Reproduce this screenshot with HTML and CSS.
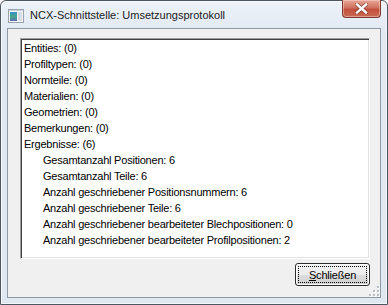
FILE: index.html
```
<!DOCTYPE html>
<html>
<head>
<meta charset="utf-8">
<link rel="stylesheet" href="styles.css">
</head>
<body>
<div class="window">
  <div class="titlebar">
    <span class="app-icon">
      <svg width="16" height="14" viewBox="0 0 16 14">
        <defs>
          <linearGradient id="ig" x1="0" y1="0" x2="0" y2="1">
            <stop offset="0" stop-color="#3a8fd0"/>
            <stop offset="0.5" stop-color="#46a58a"/>
            <stop offset="1" stop-color="#5a6fb8"/>
          </linearGradient>
        </defs>
        <rect x="0.5" y="0.5" width="15" height="13" fill="#f4f6f8" stroke="#9aa3ad"/>
        <rect x="2" y="3" width="7" height="9" fill="url(#ig)"/>
        <rect x="10" y="3" width="4" height="9" fill="#d8dde3"/>
        <rect x="1" y="1" width="14" height="1" fill="#c9d3de"/>
      </svg>
    </span>
    <span class="title">NCX-Schnittstelle: Umsetzungsprotokoll</span>
    <span class="close">
      <svg width="13" height="11" viewBox="0 0 13 11">
        <path d="M2 1.5 L11 9.5 M11 1.5 L2 9.5" stroke="#5a2a24" stroke-width="4" stroke-linecap="square" opacity="0.55"/>
        <path d="M2 1.5 L11 9.5 M11 1.5 L2 9.5" stroke="#ffffff" stroke-width="2.4" stroke-linecap="square"/>
      </svg>
    </span>
  </div>
  <div class="client">
    <div class="listbox">
      <div class="line">Entities: (0)</div>
      <div class="line">Profiltypen: (0)</div>
      <div class="line">Normteile: (0)</div>
      <div class="line">Materialien: (0)</div>
      <div class="line">Geometrien: (0)</div>
      <div class="line">Bemerkungen: (0)</div>
      <div class="line">Ergebnisse: (6)</div>
      <div class="line sub">Gesamtanzahl Positionen: 6</div>
      <div class="line sub">Gesamtanzahl Teile: 6</div>
      <div class="line sub">Anzahl geschriebener Positionsnummern: 6</div>
      <div class="line sub">Anzahl geschriebener Teile: 6</div>
      <div class="line sub">Anzahl geschriebener bearbeiteter Blechpositionen: 0</div>
      <div class="line sub">Anzahl geschriebener bearbeiteter Profilpositionen: 2</div>
    </div>
    <div class="actions">
      <button class="btn"><span class="focus"><u>S</u>chließen</span></button>
    </div>
    <div class="grip">
      <span></span><span></span><span></span>
      <span></span><span></span><span></span>
    </div>
  </div>
</div>
</body>
</html>
```
FILE: styles.css
```
html, body {
  margin: 0;
  padding: 0;
  background: #ffffff;
}

.window {
  position: relative;
  box-sizing: border-box;
  width: 388px;
  height: 305px;
  border: 1px solid #4d5661;
  border-radius: 6px 6px 0 0;
  background: linear-gradient(#eef3f9, #e1e9f3 30px, #dfe7f1);
  padding: 0 6px 6px 6px;
  display: flex;
  flex-direction: column;
  box-shadow: inset 1px 1px 0 #f8fbfe, inset -1px -1px 0 #f3f7fb;
}

.titlebar {
  height: 27px;
  display: flex;
  align-items: flex-start;
  flex: none;
}

.app-icon {
  display: flex;
  margin: 8px 0 0 1px;
  width: 16px;
  height: 14px;
}

.title {
  margin: 7px 0 0 6px;
  font-family: "Liberation Sans", Arial, sans-serif;
  font-size: 11px;
  line-height: 14px;
  color: #1a1a1a;
}

.close {
  margin-left: auto;
  margin-right: 0;
  margin-top: -1px;
  width: 39px;
  height: 18px;
  box-sizing: border-box;
  border: 1px solid #7c3a31;
  border-top: none;
  border-radius: 0 0 4px 4px;
  background: linear-gradient(#e9a898, #d0715f 45%, #c3503c 55%, #c86a54);
  box-shadow: inset 0 0 0 1px rgba(255, 220, 210, 0.45);
  display: flex;
  align-items: center;
  justify-content: center;
}

.client {
  position: relative;
  flex: 1;
  box-sizing: border-box;
  border: 1px solid #8f9aa6;
  background: #f0f0f0;
  padding: 9px 10px 0 12px;
  display: flex;
  flex-direction: column;
}

.listbox {
  box-sizing: border-box;
  height: 221px;
  background: #ffffff;
  border-style: solid;
  border-width: 1px;
  border-color: #a0a0a0 #ffffff #ffffff #a0a0a0;
  box-shadow: inset 1px 1px 0 #404040, inset -1px -1px 0 #e3e3e3;
  padding: 1px 2px;
  font-family: "Liberation Sans", Arial, sans-serif;
  font-size: 11px;
  letter-spacing: -0.22px;
  line-height: 16px;
  color: #000000;
}

.line {
  padding-left: 1px;
  white-space: nowrap;
}

.line.sub {
  padding-left: 20px;
}

.actions {
  display: flex;
  justify-content: flex-end;
  margin-top: 4px;
}

.btn {
  box-sizing: border-box;
  width: 75px;
  height: 23px;
  padding: 2px;
  margin: 0;
  border: 1px solid #2d2d2d;
  border-radius: 3px;
  background: linear-gradient(#f2f2f2, #ebebeb 50%, #dddddd 51%, #cfcfcf);
  box-shadow: inset 0 0 0 1px #fbfbfb;
  font-family: "Liberation Sans", Arial, sans-serif;
  font-size: 11px;
  letter-spacing: -0.2px;
  color: #000000;
  display: flex;
}

.focus {
  flex: 1;
  border: 1px dotted #000000;
  display: flex;
  align-items: center;
  justify-content: center;
  line-height: 14px;
}

.focus u {
  text-decoration-thickness: 1px;
  text-underline-offset: 1px;
}

.grip {
  position: absolute;
  right: 1px;
  bottom: 1px;
  width: 11px;
  height: 11px;
  display: grid;
  grid-template-columns: repeat(3, 2px);
  grid-template-rows: repeat(3, 2px);
  gap: 2px 2px;
  justify-content: end;
  align-content: end;
}

.grip span {
  width: 2px;
  height: 2px;
  background: #b8bec6;
  box-shadow: 1px 1px 0 #ffffff;
}

.grip span:nth-child(1) { grid-column: 3; grid-row: 1; }
.grip span:nth-child(2) { grid-column: 2; grid-row: 2; }
.grip span:nth-child(3) { grid-column: 3; grid-row: 2; }
.grip span:nth-child(4) { grid-column: 1; grid-row: 3; }
.grip span:nth-child(5) { grid-column: 2; grid-row: 3; }
.grip span:nth-child(6) { grid-column: 3; grid-row: 3; }
```
